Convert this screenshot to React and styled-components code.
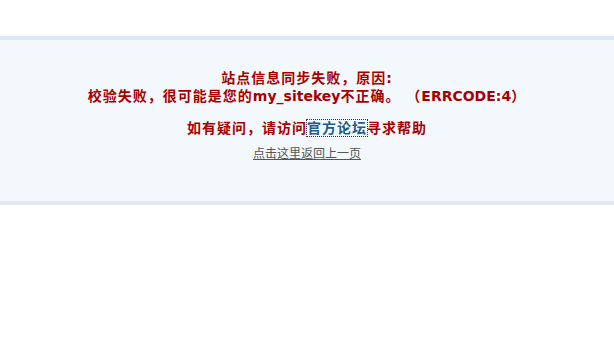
import React from 'react';
import styled, { createGlobalStyle } from 'styled-components';

const GlobalStyle = createGlobalStyle`
	body {
		margin: 0;
		background: #ffffff;
		font-family: Tahoma, "DejaVu Sans", "Noto Sans CJK SC", sans-serif;
	}
`;

const Page = styled.div`
	padding-top: 36px;
`;

const Notice = styled.div`
	background-color: #f2f8fb;
	border-top: 4px solid #dde9f2;
	border-bottom: 4px solid #dde9f2;
	padding: 29px 0 39px;
	text-align: center;
`;

const Message = styled.p`
	margin: 0;
	color: #a80000;
	font-size: 14px;
	font-weight: bold;
	line-height: 18px;
	letter-spacing: 1px;
`;

const Latin = styled.span`
	letter-spacing: 0;
`;

const Help = styled(Message)`
	margin-top: 14px;
`;

const ForumLink = styled.a`
	color: #1e5d8c;
	text-decoration: none;
	outline: 1px dotted #333333;
`;

const BackLink = styled.a`
	display: inline-block;
	margin-top: 9px;
	color: #555555;
	font-size: 12px;
	line-height: 16px;
	text-decoration: underline;
`;

export default function App() {
	return (
		<>
			<GlobalStyle />
			<Page>
				<Notice>
					<Message>站点信息同步失败，原因:</Message>
					<Message>
						校验失败，很可能是您的<Latin>my_sitekey</Latin>不正确。{' '}
						（<Latin>ERRCODE:4</Latin>）
					</Message>
					<Help>
						如有疑问，请访问<ForumLink href='#'>官方论坛</ForumLink>寻求帮助
					</Help>
					<BackLink href='#'>点击这里返回上一页</BackLink>
				</Notice>
			</Page>
		</>
	);
}
